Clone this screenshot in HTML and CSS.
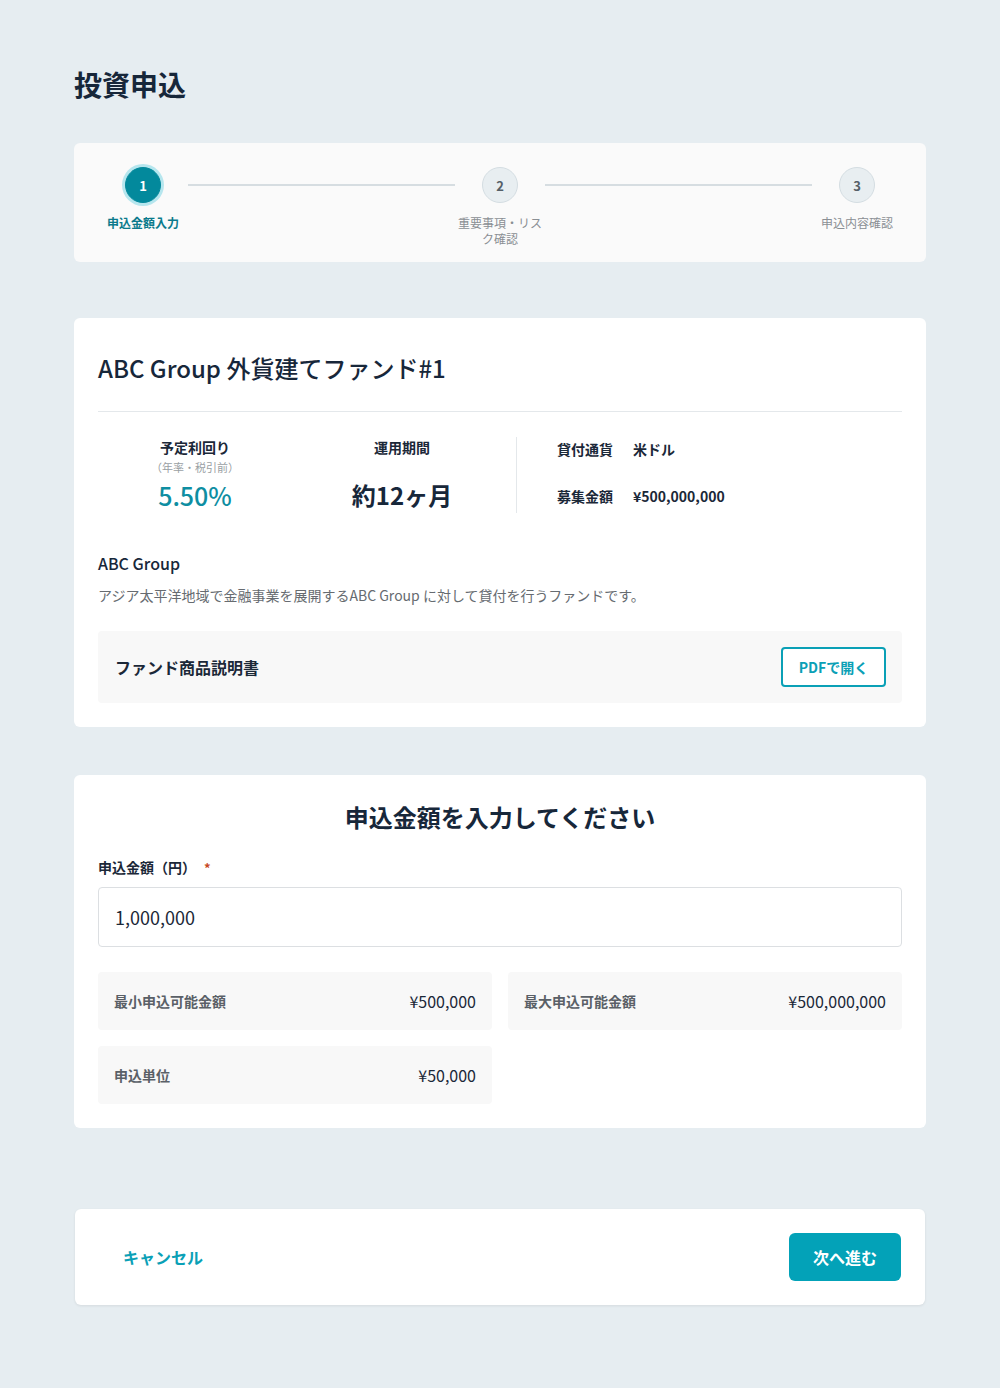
FILE: index.html
```html
<!DOCTYPE html>
<html lang="ja">
<head>
<meta charset="utf-8">
<title>投資申込</title>
<link rel="stylesheet" href="styles.css">
</head>
<body>
<div class="page">
  <h1 class="page-title">投資申込</h1>

  <div class="stepper">
    <div class="step is-active">
      <div class="step-circle">1</div>
      <div class="step-label">申込金額入力</div>
    </div>
    <div class="step-line"></div>
    <div class="step">
      <div class="step-circle">2</div>
      <div class="step-label">重要事項・リスク確認</div>
    </div>
    <div class="step-line"></div>
    <div class="step">
      <div class="step-circle">3</div>
      <div class="step-label">申込内容確認</div>
    </div>
  </div>

  <section class="card fund">
    <h2 class="fund-title">ABC Group 外貨建てファンド#1</h2>
    <div class="stats">
      <div class="stat stat-yield">
        <div class="stat-label">予定利回り</div>
        <div class="stat-sub">（年率・税引前）</div>
        <div class="stat-value teal">5.50%</div>
      </div>
      <div class="stat stat-term">
        <div class="stat-label">運用期間</div>
        <div class="stat-value">約12ヶ月</div>
      </div>
      <div class="stat-detail">
        <div class="detail-row first"><span class="detail-key">貸付通貨</span><span class="detail-val">米ドル</span></div>
        <div class="detail-row"><span class="detail-key">募集金額</span><span class="detail-val">¥500,000,000</span></div>
      </div>
    </div>
    <h3 class="borrower">ABC Group</h3>
    <p class="desc">アジア太平洋地域で金融事業を展開するABC Group に対して貸付を行うファンドです。</p>
    <div class="doc-box">
      <span class="doc-name">ファンド商品説明書</span>
      <button class="btn-outline">PDFで開く</button>
    </div>
  </section>

  <section class="card form">
    <h2 class="form-title">申込金額を入力してください</h2>
    <label class="field-label">申込金額（円）<span class="req">*</span></label>
    <div class="input">1,000,000</div>
    <div class="limits">
      <div class="limit"><span class="limit-key">最小申込可能金額</span><span class="limit-val">¥500,000</span></div>
      <div class="limit"><span class="limit-key">最大申込可能金額</span><span class="limit-val">¥500,000,000</span></div>
      <div class="limit"><span class="limit-key">申込単位</span><span class="limit-val">¥50,000</span></div>
    </div>
  </section>

  <div class="actions">
    <button class="btn-text">キャンセル</button>
    <button class="btn-primary">次へ進む</button>
  </div>
</div>
</body>
</html>
```

FILE: styles.css
```css
* { box-sizing: border-box; }
html, body { margin: 0; padding: 0; }
body {
  background: #e6edf1;
  font-family: "Noto Sans CJK JP", "Noto Sans", sans-serif;
  color: #1b2838;
}
.page {
  padding: 64px 74px 83px;
  min-height: 1388px;
}
.page-title {
  margin: 0;
  font-size: 28px;
  line-height: 40px;
  font-weight: 700;
  color: #17273a;
}

/* stepper */
.stepper {
  margin-top: 39px;
  background: #fafafa;
  border-radius: 6px;
  padding: 24px 24px 15px;
  display: flex;
  align-items: flex-start;
}
.step {
  width: 90px;
  display: flex;
  flex-direction: column;
  align-items: center;
}
.step-circle {
  width: 36px;
  height: 36px;
  border-radius: 50%;
  background: #e8eef1;
  border: 1px solid #d4dde2;
  color: #555f68;
  font-size: 13px;
  font-weight: 700;
  display: flex;
  align-items: center;
  justify-content: center;
}
.step.is-active .step-circle {
  background: #03899c;
  border-color: #03899c;
  color: #fff;
  box-shadow: 0 0 0 3px #b6e6ee;
}
.step-label {
  margin-top: 12px;
  font-size: 12px;
  line-height: 16px;
  color: #8a8f94;
  text-align: center;
}
.step.is-active .step-label {
  color: #0b7a8c;
  font-weight: 700;
}
.step-line {
  flex: 1;
  height: 2px;
  background: #d6dde1;
  margin-top: 17px;
}

/* cards */
.card {
  background: #fff;
  border-radius: 6px;
}
.fund {
  margin-top: 56px;
  padding: 32px 24px 24px;
}
.fund-title {
  margin: 0;
  padding-bottom: 25px;
  border-bottom: 1px solid #e4e8eb;
  font-size: 24px;
  line-height: 36px;
  font-weight: 500;
  color: #17273a;
}
.stats {
  margin-top: 25px;
  display: flex;
  align-items: flex-start;
}
.stat {
  display: flex;
  flex-direction: column;
  align-items: center;
  height: 74px;
}
.stat-yield { width: 194px; }
.stat-term { width: 220px; justify-content: space-between; }
.stat-label {
  font-size: 14px;
  line-height: 21px;
  font-weight: 700;
  color: #1b2838;
}
.stat-sub {
  margin-top: 1px;
  font-size: 11px;
  line-height: 16px;
  color: #9a9fa4;
}
.stat-value {
  margin-top: auto;
  font-size: 24px;
  line-height: 32px;
  font-weight: 700;
  color: #17273a;
}
.stat-value.teal {
  color: #0e8ea2;
  font-weight: 500;
  font-size: 25px;
}
.stat-detail {
  margin-left: 4px;
  border-left: 1px solid #e4e8eb;
  padding-left: 40px;
  height: 76px;
}
.detail-row {
  display: flex;
  font-size: 14px;
  line-height: 21px;
  font-weight: 700;
  color: #1b2838;
  margin-top: 26px;
}
.detail-row.first { margin-top: 2px; }
.detail-key { width: 76px; }
.borrower {
  margin: 38px 0 0;
  font-size: 16px;
  line-height: 24px;
  font-weight: 500;
  color: #17273a;
}
.desc {
  margin: 10px 0 0;
  font-size: 14px;
  line-height: 21px;
  color: #666b70;
}
.doc-box {
  margin-top: 25px;
  background: #f8f8f8;
  border-radius: 4px;
  padding: 16px;
  display: flex;
  align-items: center;
  justify-content: space-between;
}
.doc-name {
  padding-left: 1px;
  font-size: 16px;
  font-weight: 700;
  color: #1b2838;
}
.btn-outline {
  height: 40px;
  width: 105px;
  background: #fff;
  border: 2px solid #0aa0b6;
  border-radius: 4px;
  color: #0aa0b6;
  font-family: inherit;
  font-size: 14px;
  font-weight: 700;
  padding: 0;
}

/* form */
.form {
  margin-top: 48px;
  padding: 24px;
}
.form-title {
  margin: 0;
  text-align: center;
  font-size: 24px;
  line-height: 36px;
  font-weight: 700;
  color: #17273a;
}
.field-label {
  display: block;
  margin-top: 22px;
  font-size: 14px;
  line-height: 21px;
  font-weight: 700;
  color: #1b2838;
}
.req {
  color: #c8491f;
  margin-left: 8px;
  font-size: 13px;
}
.input {
  margin-top: 9px;
  height: 60px;
  border: 1px solid #dcdfe2;
  border-radius: 4px;
  padding: 0 16px;
  display: flex;
  align-items: center;
  font-size: 18px;
  color: #1b2838;
}
.limits {
  margin-top: 25px;
  display: grid;
  grid-template-columns: 1fr 1fr;
  gap: 16px;
}
.limit {
  height: 58px;
  background: #f8f8f8;
  border-radius: 4px;
  padding: 0 16px;
  display: flex;
  align-items: center;
  justify-content: space-between;
}
.limit-key {
  font-size: 14px;
  font-weight: 700;
  color: #5a6067;
}
.limit-val {
  font-size: 16px;
  color: #1b2838;
}

/* actions */
.actions {
  margin: 81px 1px 0;
  background: #fff;
  border-radius: 6px;
  box-shadow: 0 1px 3px rgba(0, 0, 0, 0.08);
  padding: 24px;
  display: flex;
  align-items: center;
  justify-content: space-between;
}
.btn-text {
  background: none;
  border: 0;
  padding: 0 24px;
  height: 48px;
  font-family: inherit;
  font-size: 16px;
  font-weight: 700;
  color: #0aa0b6;
}
.btn-primary {
  width: 112px;
  height: 48px;
  background: #03a2b8;
  border: 0;
  border-radius: 6px;
  color: #fff;
  font-family: inherit;
  font-size: 16px;
  font-weight: 700;
  padding: 0;
}
```
